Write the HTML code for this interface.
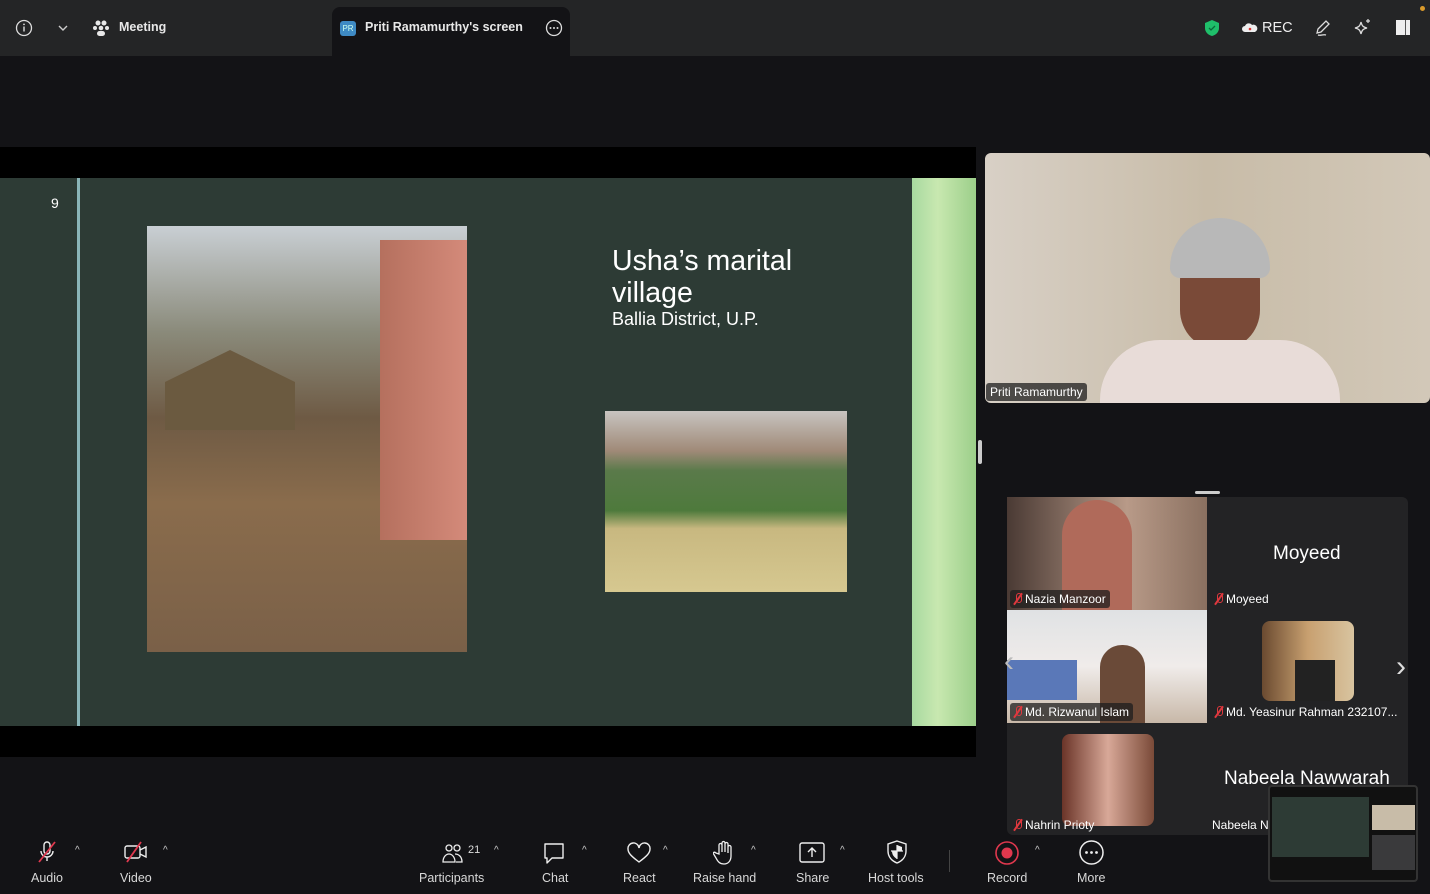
<!DOCTYPE html>
<html><head><meta charset="utf-8"><style>
*{margin:0;padding:0;box-sizing:border-box}
body{width:1430px;height:894px;background:#131316;font-family:"Liberation Sans",sans-serif;color:#fff;position:relative;overflow:hidden}
.abs{position:absolute}
.top{left:0;top:0;width:1430px;height:56px;background:#242526}
.tab{left:332px;top:7px;width:238px;height:49px;background:#131316;border-radius:8px 8px 0 0}
.t{font-size:12.5px;font-weight:bold;color:#e8e8e8}
.lbl{font-size:12px;color:#fff;background:rgba(30,30,30,.75);padding:2px 4px;border-radius:3px}
.mic{display:inline-block;width:8px;height:11px;margin-right:3px;position:relative;vertical-align:-1px}
.mic:before{content:"";position:absolute;left:2px;top:0;width:4px;height:8px;border:1.5px solid #e0383e;border-radius:3px}
.mic:after{content:"";position:absolute;left:3px;top:-1px;width:2px;height:14px;background:#e0383e;transform:rotate(35deg)}
.bl{font-size:12.5px;color:#d8d8d8;text-align:center;position:absolute;top:871px}
.caret{position:absolute;top:845px;font-size:10px;color:#ccc}
</style></head><body>
<div class="abs top"></div>
<div class="abs tab"></div>
<svg class="abs" style="left:15px;top:19px" width="18" height="18" viewBox="0 0 18 18"><circle cx="9" cy="9" r="7.5" fill="none" stroke="#ddd" stroke-width="1.3"/><rect x="8.3" y="7.5" width="1.4" height="5" fill="#ddd"/><circle cx="9" cy="5.4" r=".9" fill="#ddd"/></svg>
<svg class="abs" style="left:58px;top:24px" width="10" height="8"><path d="M1 2l4 4 4-4" fill="none" stroke="#ccc" stroke-width="1.4"/></svg>
<svg class="abs" style="left:92px;top:19px" width="18" height="18" viewBox="0 0 18 18" fill="#e8e8e8"><circle cx="6" cy="4" r="2.5"/><circle cx="12" cy="4" r="2.5"/><circle cx="3" cy="9" r="2"/><circle cx="15" cy="9" r="2"/><circle cx="9" cy="9" r="2.3"/><rect x="5" y="12" width="8" height="5" rx="2.5"/></svg>
<div class="abs t" style="left:119px;top:20px">Meeting</div>
<div class="abs" style="left:340px;top:21px;width:16px;height:15px;background:#3e8ac4;border-radius:3px;font-size:8px;text-align:center;line-height:15px;color:#cfe">PR</div>
<div class="abs t" style="left:365px;top:20px">Priti Ramamurthy's screen</div>
<svg class="abs" style="left:545px;top:19px" width="18" height="18"><circle cx="9" cy="9" r="7.5" fill="none" stroke="#ddd" stroke-width="1.3"/><circle cx="5.5" cy="9" r="1" fill="#ddd"/><circle cx="9" cy="9" r="1" fill="#ddd"/><circle cx="12.5" cy="9" r="1" fill="#ddd"/></svg>
<svg class="abs" style="left:1203px;top:19px" width="18" height="18"><path d="M9 1l7 3v5c0 4-3 7-7 8-4-1-7-4-7-8V4z" fill="#1fbf6a"/><path d="M6 9l2 2 4-4" fill="none" stroke="#0a6a3a" stroke-width="1.3"/></svg>
<svg class="abs" style="left:1242px;top:22px" width="16" height="11"><path d="M3 10a3 3 0 010-6 4 4 0 017-1 3 3 0 013 7z" fill="#eee"/><circle cx="8" cy="7" r="1.3" fill="#d33"/></svg>
<div class="abs" style="left:1262px;top:20px;font-size:14.5px;color:#eee">REC</div>
<svg class="abs" style="left:1314px;top:19px" width="18" height="18"><path d="M3 14l1-4 8-8 3 3-8 8zM4 16c3 1 5-1 8 0" fill="none" stroke="#ddd" stroke-width="1.3"/></svg>
<svg class="abs" style="left:1354px;top:18px" width="18" height="18"><path d="M7 4c1 4 2 5 6 6-4 1-5 2-6 6-1-4-2-5-6-6 4-1 5-2 6-6z" fill="none" stroke="#ddd" stroke-width="1.3"/><path d="M14 1v4M12 3h4" stroke="#ddd" stroke-width="1.2"/></svg>
<div class="abs" style="left:1396px;top:20px;width:14px;height:15px;background:#eee"></div>
<div class="abs" style="left:1405px;top:20px;width:1px;height:15px;background:#555"></div>
<div class="abs" style="left:1420px;top:6px;width:5px;height:5px;border-radius:50%;background:#d99a2b"></div>

<div class="abs" style="left:0;top:147px;width:976px;height:610px;background:#000"></div>
<div class="abs" style="left:0;top:178px;width:976px;height:548px;background:#2d3b35"></div>
<div class="abs" style="left:77px;top:178px;width:3px;height:548px;background:#8ab5b8"></div>
<div class="abs" style="left:912px;top:178px;width:64px;height:548px;background:linear-gradient(90deg,#a8d9a0,#c8e8b0 40%,#9ccf8a)"></div>
<div class="abs" style="left:51px;top:195px;font-size:14px;color:#fff">9</div>
<div class="abs" style="left:147px;top:226px;width:320px;height:426px;background:linear-gradient(180deg,#c9cfd4 0%,#8a8a7a 25%,#6e5a44 45%,#8a6c4c 65%,#7a6048 100%)"></div>
<div class="abs" style="left:380px;top:240px;width:87px;height:300px;background:linear-gradient(90deg,#b5705e,#d48a7a)"></div>
<div class="abs" style="left:165px;top:350px;width:130px;height:80px;background:#6b5a40;clip-path:polygon(0 40%,50% 0,100% 40%,100% 100%,0 100%)"></div>
<div class="abs" style="left:612px;top:245px;font-size:28.5px;line-height:32px;color:#fff">Usha’s marital<br>village</div>
<div class="abs" style="left:612px;top:309px;font-size:18px;color:#fff">Ballia District, U.P.</div>
<div class="abs" style="left:605px;top:411px;width:242px;height:181px;background:linear-gradient(180deg,#c8c4c0 0%,#a08a78 22%,#5a7a4a 33%,#4e7a3c 55%,#c8b880 65%,#d6c890 100%)"></div>
<div class="abs" style="left:978px;top:440px;width:4px;height:24px;background:#ccc;border-radius:2px"></div>

<div class="abs" style="left:985px;top:153px;width:445px;height:250px;background:linear-gradient(90deg,#d8d0c6,#c8bca8 50%,#d2c8b8);border-radius:6px"></div>
<div class="abs" style="left:1180px;top:240px;width:80px;height:110px;border-radius:40px;background:#7a4a38"></div>
<div class="abs" style="left:1170px;top:218px;width:100px;height:60px;border-radius:50px 50px 10px 10px;background:#b8b8b8"></div>
<div class="abs" style="left:1100px;top:340px;width:240px;height:63px;border-radius:60px 60px 0 0;background:#e8dcd8"></div>
<div class="abs lbl" style="left:986px;top:383px">Priti Ramamurthy</div>
<div class="abs" style="left:1195px;top:491px;width:25px;height:3px;background:#ccc;border-radius:2px"></div>

<div class="abs" style="left:1007px;top:497px;width:401px;height:338px;background:#232325;border-radius:6px"></div>
<div class="abs" style="left:1007px;top:497px;width:200px;height:113px;background:linear-gradient(90deg,#4a3a34,#b89a88 60%,#8a7060)"></div>
<div class="abs" style="left:1062px;top:500px;width:70px;height:110px;border-radius:35px 35px 0 0;background:#b06a5a"></div>
<div class="abs lbl" style="left:1010px;top:590px"><span class="mic"></span>Nazia Manzoor</div>
<div class="abs" style="left:1273px;top:543px;font-size:19px">Moyeed</div>
<div class="abs lbl" style="left:1211px;top:590px;background:none"><span class="mic"></span>Moyeed</div>
<div class="abs" style="left:1007px;top:610px;width:200px;height:113px;background:linear-gradient(180deg,#e0e2e4,#f0ecea 50%,#c8b8a8)"></div>
<div class="abs" style="left:1007px;top:660px;width:70px;height:40px;background:#5a78b8"></div>
<div class="abs" style="left:1100px;top:645px;width:45px;height:78px;border-radius:22px 22px 0 0;background:#6a4a38"></div>
<div class="abs lbl" style="left:1010px;top:703px"><span class="mic"></span>Md. Rizwanul Islam</div>
<div class="abs" style="left:1262px;top:621px;width:92px;height:80px;border-radius:8px;background:linear-gradient(90deg,#6a4a30,#c8a070 50%,#d8c4a0)"></div>
<div class="abs" style="left:1295px;top:660px;width:40px;height:41px;background:#222"></div>
<div class="abs lbl" style="left:1211px;top:703px;background:none"><span class="mic"></span>Md. Yeasinur Rahman 232107...</div>
<div class="abs" style="left:1396px;top:650px;font-size:30px;color:#ddd">›</div>
<div class="abs" style="left:1004px;top:645px;font-size:30px;color:#bbb">‹</div>
<div class="abs" style="left:1062px;top:734px;width:92px;height:92px;border-radius:8px;background:linear-gradient(90deg,#6a3428,#d8a898 50%,#7a4a38)"></div>
<div class="abs lbl" style="left:1010px;top:816px;background:none"><span class="mic"></span>Nahrin Prioty</div>
<div class="abs" style="left:1224px;top:768px;font-size:19px">Nabeela Nawwarah</div>
<div class="abs" style="left:1212px;top:818px;font-size:12px">Nabeela N</div>
<div class="abs" style="left:1268px;top:785px;width:150px;height:97px;background:#111;border:2px solid #333;border-radius:4px"></div>
<div class="abs" style="left:1272px;top:797px;width:97px;height:60px;background:#2d3b35"></div>
<div class="abs" style="left:1372px;top:805px;width:43px;height:25px;background:#c8bca8"></div>
<div class="abs" style="left:1372px;top:835px;width:43px;height:35px;background:#3a3a3c"></div>

<svg class="abs" style="left:36px;top:840px" width="22" height="24"><rect x="8" y="2" width="6" height="12" rx="3" fill="none" stroke="#eee" stroke-width="1.4"/><path d="M5 11a6 6 0 0012 0M11 17v4" fill="none" stroke="#eee" stroke-width="1.4"/><path d="M3 22L19 2" stroke="#e0384e" stroke-width="1.8"/></svg>
<div class="caret" style="left:75px">^</div>
<div class="bl" style="left:31px">Audio</div>
<svg class="abs" style="left:123px;top:841px" width="26" height="22"><rect x="2" y="5" width="15" height="12" rx="2" fill="none" stroke="#eee" stroke-width="1.4"/><path d="M17 9l6-3v10l-6-3" fill="none" stroke="#eee" stroke-width="1.4"/><path d="M4 21L18 1" stroke="#e0384e" stroke-width="1.8"/></svg>
<div class="caret" style="left:163px">^</div>
<div class="bl" style="left:120px">Video</div>
<svg class="abs" style="left:442px;top:842px" width="22" height="22"><circle cx="7" cy="6" r="3" fill="none" stroke="#eee" stroke-width="1.3"/><circle cx="15" cy="6" r="3" fill="none" stroke="#eee" stroke-width="1.3"/><path d="M1 20c0-5 3-8 6-8s6 3 6 8zM13 12c3 0 7 2 7 8h-6" fill="none" stroke="#eee" stroke-width="1.3"/></svg>
<div class="abs" style="left:468px;top:844px;font-size:11px;color:#ddd">21</div>
<div class="caret" style="left:494px">^</div>
<div class="bl" style="left:419px">Participants</div>
<svg class="abs" style="left:543px;top:842px" width="24" height="24"><path d="M2 2h18v14H9l-5 5v-5H2z" fill="none" stroke="#eee" stroke-width="1.4" stroke-linejoin="round"/></svg>
<div class="caret" style="left:582px">^</div>
<div class="bl" style="left:542px">Chat</div>
<svg class="abs" style="left:626px;top:842px" width="26" height="22"><path d="M13 20C5 14 2 11 2 7a5 5 0 0111-1 5 5 0 0111 1c0 4-3 7-11 13z" fill="none" stroke="#eee" stroke-width="1.4"/></svg>
<div class="caret" style="left:663px">^</div>
<div class="bl" style="left:623px">React</div>
<svg class="abs" style="left:713px;top:840px" width="22" height="26"><path d="M6 14V5a1.5 1.5 0 013 0v7V3a1.5 1.5 0 013 0v9V4a1.5 1.5 0 013 0v9V7a1.5 1.5 0 013 0v9c0 5-3 8-7 8s-6-2-8-6l-3-5c1-1 2-1 3 0z" fill="none" stroke="#eee" stroke-width="1.3"/></svg>
<div class="caret" style="left:751px">^</div>
<div class="bl" style="left:693px">Raise hand</div>
<svg class="abs" style="left:799px;top:842px" width="26" height="22"><rect x="1" y="1" width="24" height="19" rx="2" fill="none" stroke="#eee" stroke-width="1.4"/><path d="M13 15V6M9 10l4-4 4 4" fill="none" stroke="#eee" stroke-width="1.4"/></svg>
<div class="caret" style="left:840px">^</div>
<div class="bl" style="left:796px">Share</div>
<svg class="abs" style="left:886px;top:840px" width="22" height="24"><path d="M11 1l9 3v7c0 6-4 10-9 12-5-2-9-6-9-12V4z" fill="none" stroke="#eee" stroke-width="1.4"/><path d="M11 5v14M5 11h12" stroke="#eee" stroke-width="1.2"/><path d="M11 5l5 2v4h-5zM6 11h5v8c-3-2-5-4-5-8z" fill="#eee"/></svg>
<div class="bl" style="left:868px">Host tools</div>
<div class="abs" style="left:949px;top:850px;width:1px;height:22px;background:#444"></div>
<svg class="abs" style="left:994px;top:840px" width="26" height="26"><circle cx="13" cy="13" r="11" fill="none" stroke="#e0384e" stroke-width="1.6"/><circle cx="13" cy="13" r="5.5" fill="#e0384e"/></svg>
<div class="caret" style="left:1035px">^</div>
<div class="bl" style="left:987px">Record</div>
<svg class="abs" style="left:1078px;top:839px" width="27" height="27"><circle cx="13.5" cy="13.5" r="11.5" fill="none" stroke="#eee" stroke-width="1.5"/><circle cx="8.5" cy="13.5" r="1.4" fill="#eee"/><circle cx="13.5" cy="13.5" r="1.4" fill="#eee"/><circle cx="18.5" cy="13.5" r="1.4" fill="#eee"/></svg>
<div class="bl" style="left:1077px">More</div>
</body></html>
